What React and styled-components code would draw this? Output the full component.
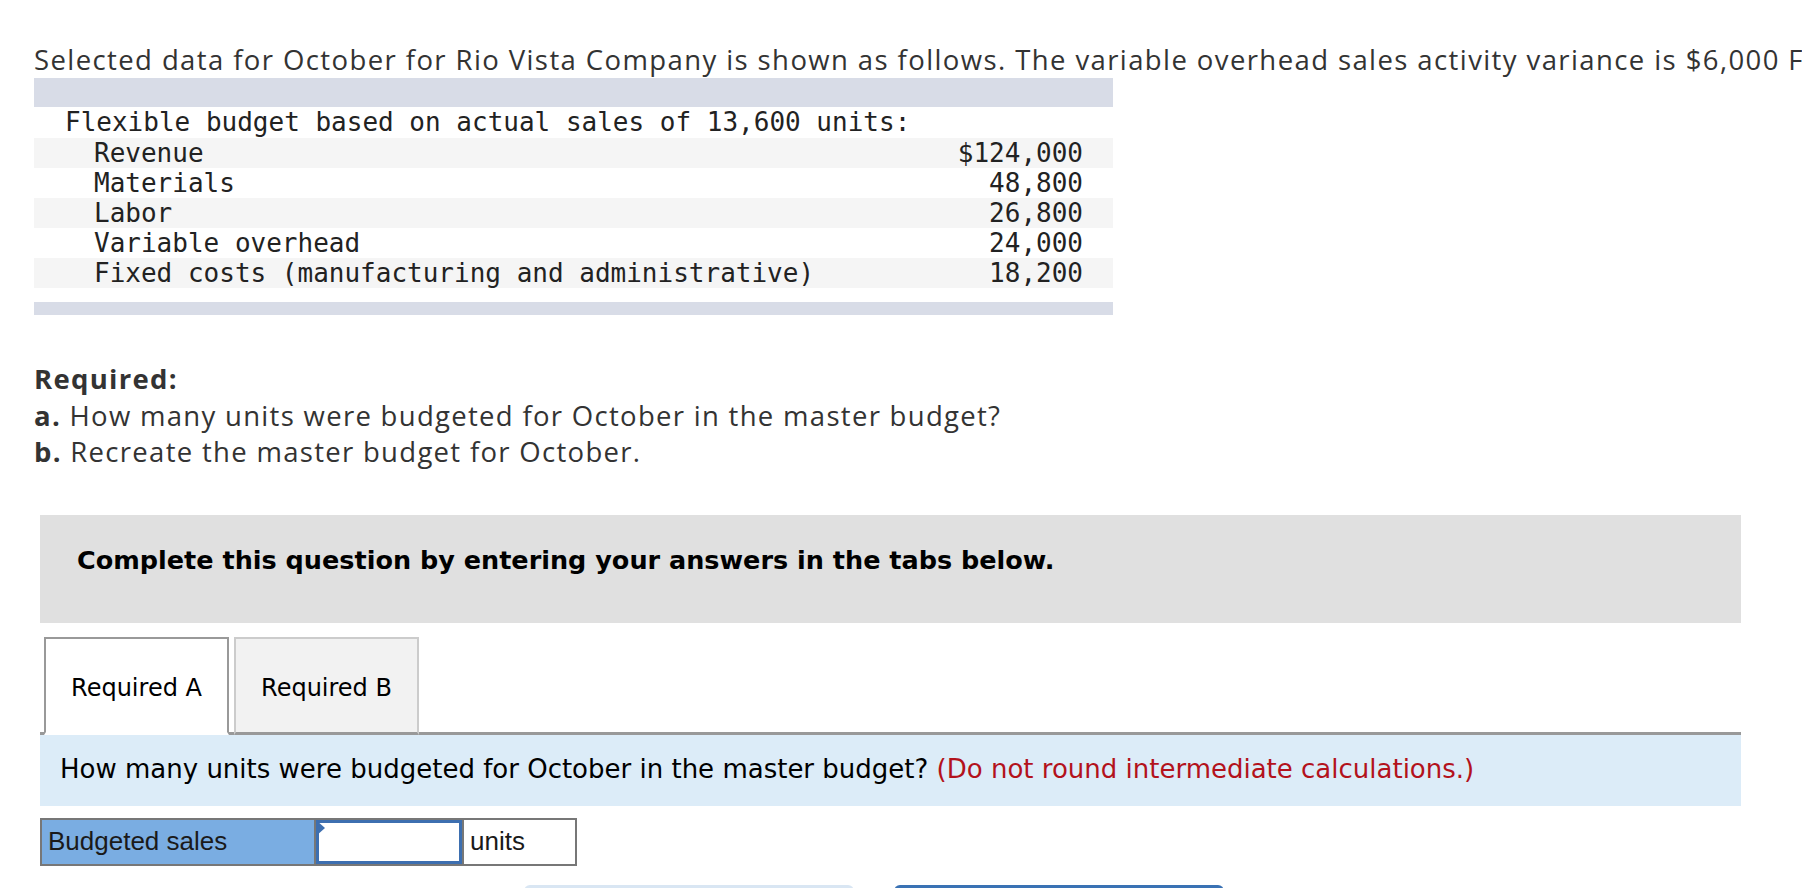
import React, { useState } from "react";
import styled, { createGlobalStyle } from "styled-components";

const GlobalStyle = createGlobalStyle`
  html, body {
    margin: 0;
    padding: 0;
    background: #ffffff;
  }
  body {
    font-family: "Open Sans", "Liberation Sans", sans-serif;
    color: #333333;
  }
`;

const rows = [
  { label: "Revenue", value: "$124,000" },
  { label: "Materials", value: "48,800" },
  { label: "Labor", value: "26,800" },
  { label: "Variable overhead", value: "24,000" },
  { label: "Fixed costs (manufacturing and administrative)", value: "18,200" },
];

const App = () => {
  const [activeTab, setActiveTab] = useState("A");
  const [units, setUnits] = useState("");

  return (
    <Page>
      <GlobalStyle />
      <Intro>
        Selected data for October for Rio Vista Company is shown as follows. The variable overhead sales activity variance is $6,000 F.
      </Intro>

      <DataTable>
        <Band />
        <HeaderRow>Flexible budget based on actual sales of 13,600 units:</HeaderRow>
        {rows.map((row, i) => (
          <DataRow key={row.label} shaded={i % 2 === 0}>
            <span>{row.label}</span>
            <span>{row.value}</span>
          </DataRow>
        ))}
        <Band thin />
      </DataTable>

      <Required>
        <strong>Required:</strong>
        <div>
          <strong>a.</strong> How many units were budgeted for October in the master budget?
        </div>
        <div>
          <strong>b.</strong> Recreate the master budget for October.
        </div>
      </Required>

      <Workspace>
        <Instructions>Complete this question by entering your answers in the tabs below.</Instructions>

        <TabBar>
          <Tab active={activeTab === "A"} onClick={() => setActiveTab("A")}>
            Required A
          </Tab>
          <Tab active={activeTab === "B"} onClick={() => setActiveTab("B")}>
            Required B
          </Tab>
        </TabBar>

        <Prompt>
          How many units were budgeted for October in the master budget?{" "}
          <Hint>(Do not round intermediate calculations.)</Hint>
        </Prompt>

        <AnswerRow>
          <AnswerLabel>Budgeted sales</AnswerLabel>
          <AnswerCell>
            <Marker />
            <AnswerInput value={units} onChange={(e) => setUnits(e.target.value)} />
          </AnswerCell>
          <UnitCell>units</UnitCell>
        </AnswerRow>

        <NavButtons>
          <NavButton aria-label="Required A" />
          <NavButton primary aria-label="Required B" />
        </NavButtons>
      </Workspace>
    </Page>
  );
};

export default App;

const Page = styled.div`
  padding: 42px 0 40px 34px;
  width: 1768px;
  overflow: hidden;
`;

const Intro = styled.p`
  margin: 0;
  font-size: 27.5px;
  letter-spacing: 1.4px;
  line-height: 36px;
  white-space: nowrap;
  color: #333333;
`;

const DataTable = styled.div`
  width: 1079px;
  font-family: "DejaVu Sans Mono", "Liberation Mono", monospace;
  font-size: 26px;
  color: #222222;
`;

const Band = styled.div`
  height: ${({ thin }) => (thin ? "13px" : "29px")};
  margin-top: ${({ thin }) => (thin ? "14px" : "0")};
  background: #d8dce7;
`;

const HeaderRow = styled.div`
  height: 31px;
  line-height: 31px;
  padding-left: 31px;
  white-space: pre;
`;

const DataRow = styled.div`
  display: flex;
  justify-content: space-between;
  align-items: center;
  height: 30px;
  padding: 0 30px 0 60px;
  background: ${({ shaded }) => (shaded ? "#f5f5f5" : "#ffffff")};
  white-space: pre;
`;

const Required = styled.div`
  margin-top: 46px;
  font-size: 27.5px;
  letter-spacing: 1.3px;
  line-height: 36.5px;
  color: #333333;

  strong {
    font-weight: 700;
  }
`;

const Workspace = styled.div`
  margin: 44px 0 0 6px;
  width: 1701px;
  font-family: "DejaVu Sans", Verdana, sans-serif;
`;

const Instructions = styled.div`
  height: 108px;
  box-sizing: border-box;
  padding: 29px 0 0 37px;
  background: #e0e0e0;
  font-size: 25.5px;
  font-weight: 700;
  line-height: 32px;
  color: #000000;
`;

const TabBar = styled.div`
  display: flex;
  gap: 5px;
  margin-top: 14px;
  padding-left: 4px;
  border-bottom: 3px solid #999999;
  height: 95px;
`;

const Tab = styled.button`
  width: 185px;
  height: 98px;
  box-sizing: border-box;
  margin-bottom: -3px;
  border: 2px solid ${({ active }) => (active ? "#999999" : "#cccccc")};
  border-bottom: ${({ active }) => (active ? "3px solid #ffffff" : "3px solid #999999")};
  background: ${({ active }) => (active ? "#ffffff" : "#f2f2f2")};
  font-family: "DejaVu Sans", Verdana, sans-serif;
  font-size: 24px;
  color: #000000;
  padding: 6px 0 0;
  cursor: pointer;
`;

const Prompt = styled.div`
  height: 71px;
  box-sizing: border-box;
  padding: 18px 0 0 20px;
  background: #dcecf8;
  font-size: 26px;
  line-height: 32px;
  color: #000000;
`;

const Hint = styled.span`
  color: #b3121c;
`;

const AnswerRow = styled.div`
  display: flex;
  width: 537px;
  height: 48px;
  margin-top: 12px;
  box-sizing: border-box;
  border: 2px solid #777777;
  font-family: "Liberation Sans", Arial, sans-serif;
  font-size: 26px;
  color: #1a1a1a;
`;

const AnswerLabel = styled.div`
  width: 274px;
  display: flex;
  align-items: center;
  padding-left: 6px;
  box-sizing: border-box;
  background: #7aade2;
  border-right: 2px solid #777777;
`;

const AnswerCell = styled.div`
  position: relative;
  width: 148px;
  box-sizing: border-box;
  border-right: 2px solid #777777;
  background: #ffffff;
`;

const Marker = styled.span`
  position: absolute;
  top: 0;
  left: 0;
  width: 0;
  height: 0;
  border-top: 8px solid transparent;
  border-bottom: 8px solid transparent;
  border-left: 9px solid #3d6fb0;
`;

const AnswerInput = styled.input`
  width: 100%;
  height: 100%;
  box-sizing: border-box;
  border: 3px solid #3d6fb0;
  outline: none;
  font-family: "Liberation Sans", Arial, sans-serif;
  font-size: 26px;
  padding: 0 6px;
  text-align: right;
  background: #ffffff;
`;

const UnitCell = styled.div`
  flex: 1;
  display: flex;
  align-items: center;
  padding-left: 6px;
  background: #ffffff;
`;

const NavButtons = styled.div`
  display: flex;
  gap: 40px;
  margin-top: 19px;
  padding-left: 484px;
`;

const NavButton = styled.button`
  width: 330px;
  height: 52px;
  border: none;
  border-radius: 6px;
  background: ${({ primary }) => (primary ? "#3a72b4" : "#d9e6f3")};
  cursor: pointer;
`;
